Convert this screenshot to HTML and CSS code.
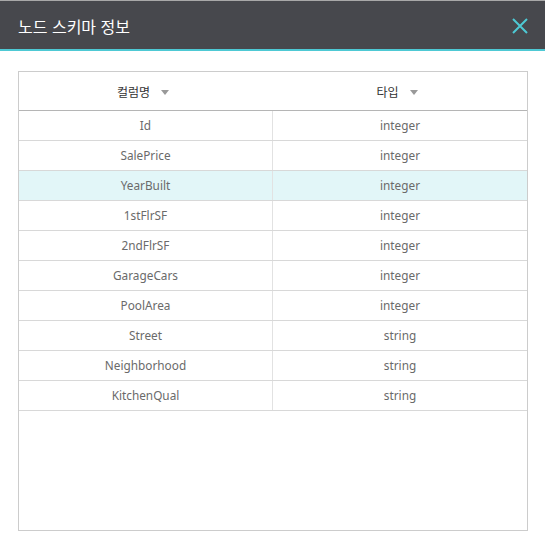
FILE: index.html
```html
<!DOCTYPE html>
<html lang="ko">
<head>
<meta charset="utf-8">
<link rel="stylesheet" href="styles.css">
</head>
<body>
<div class="dialog">
  <div class="titlebar">
    <span class="title">노드 스키마 정보</span>
    <svg class="close" width="16" height="16" viewBox="0 0 16 16"><path d="M1 1 L15 15 M15 1 L1 15" stroke="#4ec9d4" stroke-width="2" fill="none"/></svg>
  </div>
  <div class="body">
    <div class="grid">
      <div class="row head">
        <div class="cell">컬럼명<span class="sort"></span></div>
        <div class="cell">타입<span class="sort"></span></div>
      </div>
      <div class="row"><div class="cell">Id</div><div class="cell">integer</div></div>
      <div class="row"><div class="cell">SalePrice</div><div class="cell">integer</div></div>
      <div class="row selected"><div class="cell">YearBuilt</div><div class="cell">integer</div></div>
      <div class="row"><div class="cell">1stFlrSF</div><div class="cell">integer</div></div>
      <div class="row"><div class="cell">2ndFlrSF</div><div class="cell">integer</div></div>
      <div class="row"><div class="cell">GarageCars</div><div class="cell">integer</div></div>
      <div class="row"><div class="cell">PoolArea</div><div class="cell">integer</div></div>
      <div class="row"><div class="cell">Street</div><div class="cell">string</div></div>
      <div class="row"><div class="cell">Neighborhood</div><div class="cell">string</div></div>
      <div class="row"><div class="cell">KitchenQual</div><div class="cell">string</div></div>
    </div>
  </div>
</div>
</body>
</html>
```
FILE: styles.css
```css
html, body {
  margin: 0;
  padding: 0;
  background: #fff;
  font-family: "Noto Sans", "Noto Sans CJK KR", sans-serif;
}
.dialog {
  width: 545px;
  height: 547px;
  display: flex;
  flex-direction: column;
}
.titlebar {
  height: 48px;
  border-top: 1px solid #a8a8a8;
  border-bottom: 2px solid #4ec9d4;
  background: #47484d;
  display: flex;
  align-items: center;
  justify-content: space-between;
  padding: 0 17px 0 18px;
}
.title {
  color: #fff;
  font-family: "Noto Sans CJK KR", sans-serif;
  font-size: 16px;
  padding-top: 1px;
}
.close {
  display: block;
  margin-top: 1px;
}
.body {
  padding: 20px 17px 16px 18px;
  flex: 1;
  display: flex;
}
.grid {
  flex: 1;
  border: 1px solid #cccccc;
  display: flex;
  flex-direction: column;
}
.row {
  display: grid;
  grid-template-columns: 254px 1fr;
  height: 29px;
  border-bottom: 1px solid #d8d8d8;
}
.row .cell {
  display: flex;
  align-items: center;
  justify-content: center;
  font-size: 11.8px;
  color: #6a6a6a;
  padding-bottom: 2px;
}
.row .cell:first-child {
  border-right: 1px solid #e2e2e2;
}
.row.selected {
  background: #e2f6f8;
}
.row.head {
  height: 38px;
  border-bottom: 1px solid #b5b5b5;
}
.row.head .cell {
  color: #333;
  font-family: "Noto Sans CJK KR", sans-serif;
  font-size: 12px;
  border-right: none;
  padding-right: 6px;
  padding-bottom: 0;
}
.sort {
  display: inline-block;
  width: 0;
  height: 0;
  margin-left: 11px;
  margin-top: 3px;
  border-left: 4px solid transparent;
  border-right: 4px solid transparent;
  border-top: 5px solid #999;
}
```
